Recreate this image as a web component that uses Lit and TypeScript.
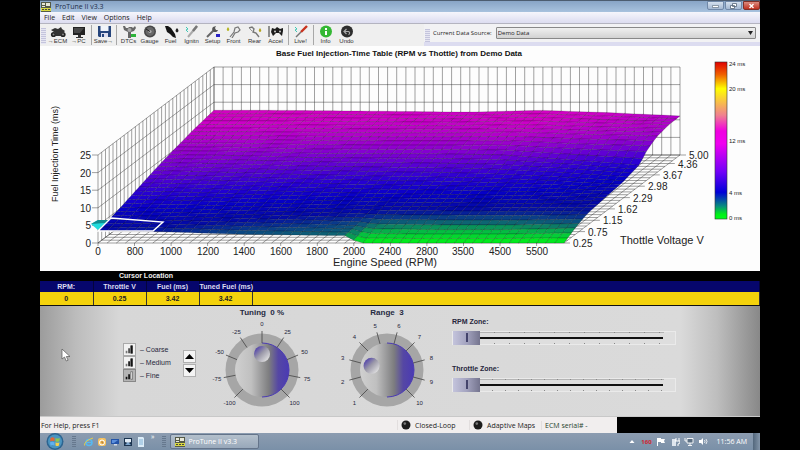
import { LitElement, html, svg, css, TemplateResult } from "lit";
import { customElement, property, state } from "lit/decorators.js";

/* ---------- Surface chart geometry ---------- */

const RPM_CELLS = 51;
const THROTTLE_CELLS = 31;
const ORIGIN = { x: 98, y: 243 };
const WIDTH = 466;
const DEPTH = { x: 116, y: 88 };
const MS = 3.52;

const RPM_LABELS = ["0", "800", "1000", "1200", "1400", "1600", "1800", "2000", "2400", "2800", "3500", "4500", "5500"];
const THROTTLE_LABELS = ["0.25", "0.75", "1.15", "1.62", "2.29", "2.98", "3.67", "4.36", "5.00"];

/* Injection time in ms, sampled at fractions of the two floor axes. */
const V_STOPS = [0, 0.1, 0.2, 0.35, 0.5, 0.65, 0.72, 0.8, 0.9, 1];
const SAMPLES: [number, number[]][] = [
  [0, [3.5, 4.3, 5.3, 7.0, 8.7, 10.1, 10.7, 11.4, 12.1, 12.7]],
  [0.12, [3.3, 4.1, 5.0, 6.6, 8.3, 10.0, 10.7, 11.4, 12.1, 12.7]],
  [0.3, [2.5, 3.4, 4.3, 5.8, 7.6, 9.4, 10.3, 11.2, 11.9, 12.5]],
  [0.45, [2.2, 2.9, 3.8, 5.3, 7.2, 9.3, 10.2, 11.1, 11.8, 12.3]],
  [0.53, [2.1, 2.5, 3.5, 5.1, 7.0, 9.3, 10.2, 11.1, 11.7, 12.2]],
  [0.56, [0, 1.7, 3.3, 5.0, 7.0, 9.3, 10.2, 11.1, 11.8, 12.2]],
  [0.7, [0, 1.4, 3.2, 4.8, 6.6, 9.0, 10.2, 11.3, 12.1, 12.7]],
  [0.85, [0, 1.4, 3.1, 4.5, 5.8, 7.6, 9.2, 10.6, 11.5, 12.0]],
  [1, [0, 1.9, 3.3, 4.0, 4.6, 6.0, 8.6, 10.2, 11.0, 11.1]],
];

const SCALE: [number, number[]][] = [
  [0, [0, 245, 20]],
  [1, [4, 200, 60]],
  [2.2, [14, 100, 115]],
  [3.6, [4, 10, 165]],
  [5, [6, 0, 200]],
  [6.5, [40, 0, 212]],
  [8.5, [105, 0, 212]],
  [12, [205, 0, 200]],
  [13, [215, 0, 190]],
];

function lerp(a: number, b: number, t: number) {
  return a + (b - a) * t;
}

function bracket(stops: number[], value: number): [number, number] {
  let i = 0;
  while (i < stops.length - 2 && value > stops[i + 1]) i++;
  return [i, Math.min(1, Math.max(0, (value - stops[i]) / (stops[i + 1] - stops[i])))];
}

function injection(u: number, v: number) {
  const [ui, ut] = bracket(SAMPLES.map((s) => s[0]), u);
  const [vi, vt] = bracket(V_STOPS, v);
  const near = lerp(SAMPLES[ui][1][vi], SAMPLES[ui][1][vi + 1], vt);
  const far = lerp(SAMPLES[ui + 1][1][vi], SAMPLES[ui + 1][1][vi + 1], vt);
  return lerp(near, far, ut);
}

function colour(ms: number) {
  const [i, t] = bracket(SCALE.map((s) => s[0]), ms);
  return `rgb(${[0, 1, 2].map((c) => Math.round(lerp(SCALE[i][1][c], SCALE[i + 1][1][c], t))).join(",")})`;
}

function point(u: number, v: number, ms: number): [number, number] {
  return [ORIGIN.x + WIDTH * u + DEPTH.x * v, ORIGIN.y - DEPTH.y * v - MS * ms];
}

function segment(a: [number, number], b: [number, number]) {
  return `M${a[0].toFixed(1)} ${a[1].toFixed(1)}L${b[0].toFixed(1)} ${b[1].toFixed(1)}`;
}

@customElement("fuel-chart")
export class FuelChart extends LitElement {
  static styles = css`
    :host { display: block; background: #fdfdfd; }
    svg { display: block; width: 100%; height: auto; font-family: "Liberation Sans", Arial, sans-serif; fill: #222; }
    .title { font-size: 8px; font-weight: bold; fill: #111; }
    .tick { font-size: 10px; }
    .axis { font-size: 11px; }
    .upright { font-size: 9px; }
    .legend { font-size: 6px; }
    .wall { fill: none; stroke: #333; stroke-width: 0.7; opacity: 0.65; }
    .cell { stroke: #000; stroke-opacity: 0.45; stroke-width: 0.4; }
    .mid { text-anchor: middle; }
    .end { text-anchor: end; }
    .cursor { fill: none; stroke: #fff; stroke-width: 1.4; }
  `;

  private walls() {
    let d = "";
    for (let i = 0; i <= RPM_CELLS; i++) {
      const u = i / RPM_CELLS;
      d += segment(point(u, 1, 0), point(u, 1, 25)) + segment(point(u, 0, 0), point(u, 1, 0));
    }
    for (let j = 0; j <= THROTTLE_CELLS; j++) {
      const v = j / THROTTLE_CELLS;
      d += segment(point(0, v, 0), point(0, v, 25)) + segment(point(0, v, 0), point(1, v, 0));
    }
    for (let ms = 0; ms <= 25; ms += 5) {
      const front = point(0, 0, ms);
      d += segment(point(0, 1, ms), point(1, 1, ms)) + segment(front, point(0, 1, ms));
      d += segment([front[0] - 6, front[1]], front);
    }
    RPM_LABELS.forEach((_, i) => {
      const p = point((i * 4) / RPM_CELLS, 0, 0);
      d += segment(p, [p[0], p[1] + 3]);
    });
    THROTTLE_LABELS.forEach((_, i) => {
      const p = point(1, Math.min(1, (i * 4) / THROTTLE_CELLS), 0);
      d += segment(p, [p[0] + 6, p[1]]);
    });
    return svg`<path class="wall" d=${d}></path>`;
  }

  private surface() {
    const cells: TemplateResult<2>[] = [];
    for (let j = THROTTLE_CELLS - 1; j >= 0; j--) {
      for (let i = 0; i < RPM_CELLS; i++) {
        const corners = [[i, j], [i + 1, j], [i + 1, j + 1], [i, j + 1]].map(([a, b]) => {
          const u = a / RPM_CELLS;
          const v = b / THROTTLE_CELLS;
          return { ms: injection(u, v), u, v };
        });
        const mean = corners.reduce((sum, c) => sum + c.ms, 0) / 4;
        const points = corners
          .map((c) => point(c.u, c.v, c.ms).map((n) => n.toFixed(1)).join(","))
          .join(" ");
        cells.push(svg`<polygon class="cell" points=${points} fill=${colour(mean)}></polygon>`);
      }
    }
    return cells;
  }

  render() {
    return html`
      <svg viewBox="40 46 720 225" role="img" aria-label="Base fuel injection-time surface">
        <defs>
          <linearGradient id="scale" x1="0" y1="0" x2="0" y2="1">
            <stop offset="0" stop-color="#e00000"></stop>
            <stop offset="0.08" stop-color="#f06000"></stop>
            <stop offset="0.17" stop-color="#ffff00"></stop>
            <stop offset="0.34" stop-color="#f08090"></stop>
            <stop offset="0.44" stop-color="#f000e0"></stop>
            <stop offset="0.52" stop-color="#f000f0"></stop>
            <stop offset="0.7" stop-color="#7000f8"></stop>
            <stop offset="0.83" stop-color="#0000d8"></stop>
            <stop offset="0.92" stop-color="#08907c"></stop>
            <stop offset="0.97" stop-color="#00f018"></stop>
            <stop offset="1" stop-color="#00ff18"></stop>
          </linearGradient>
        </defs>
        <text class="title mid" x="399" y="56">Base Fuel Injection-Time Table (RPM vs Thottle) from Demo Data</text>
        ${this.walls()}
        <polygon points="91,224 98,220 109,220 98,230" fill="#20dcdc"></polygon>
        <polygon points="91,224 98,220 109,220 105,223" fill="#108c90"></polygon>
        ${this.surface()}
        <polygon class="cursor" points="98,231 153,231 163,222 111,218"></polygon>
        ${[0, 5, 10, 15, 20, 25].map(
          (ms) => svg`<text class="tick end" x="91" y=${Math.round(ORIGIN.y - MS * ms + 4)}>${ms}</text>`
        )}
        ${RPM_LABELS.map(
          (label, i) => svg`<text class="tick mid" x=${Math.round(point((i * 4) / RPM_CELLS, 0, 0)[0])} y="255">${label}</text>`
        )}
        ${THROTTLE_LABELS.map((label, i) => {
          const p = point(1, Math.min(1, (i * 4) / THROTTLE_CELLS), 0);
          return svg`<text class="tick" x=${Math.round(p[0] + 9)} y=${Math.round(p[1] + 4)}>${label}</text>`;
        })}
        <text class="axis mid" x="385" y="266">Engine Speed (RPM)</text>
        <text class="axis" x="620" y="244">Thottle Voltage V</text>
        <text class="upright mid" transform="translate(58 154) rotate(-90)">Fuel Injection Time (ms)</text>
        <rect x="715" y="62" width="12" height="157" fill="url(#scale)" stroke="#333" stroke-width="0.6"></rect>
        ${[["24 ms", 66], ["20 ms", 91], ["12 ms", 143], ["4 ms", 195], ["0 ms", 220]].map(
          ([label, y]) => svg`<text class="legend" x="729" y=${y}>${label}</text>`
        )}
      </svg>
    `;
  }
}

/* ---------- Rotary knob ---------- */

@customElement("rotary-knob")
export class RotaryKnob extends LitElement {
  @property() label = "";
  @property() unit = "";
  @property({ type: Number }) value = 0;
  @property({ attribute: false }) marks: number[] = [];

  static styles = css`
    :host { display: block; }
    .knob { display: grid; grid-template-rows: 11px auto; justify-items: center; }
    .name { font-size: 8px; line-height: 11px; font-weight: bold; color: #262a42; white-space: pre; }
    .face { position: relative; width: 110px; }
    svg { display: block; width: 100%; }
    text { font-size: 6px; text-anchor: middle; fill: #26263c; font-family: "Liberation Sans", Arial, sans-serif; }
    .mark { stroke: #444; stroke-width: 0.8; }
    input { position: absolute; inset: 0; width: 100%; height: 100%; margin: 0; opacity: 0; cursor: pointer; }
  `;

  private angle(value: number) {
    const low = this.marks[0];
    const high = this.marks[this.marks.length - 1];
    return ((-135 + (270 * (value - low)) / (high - low)) * Math.PI) / 180;
  }

  render() {
    const at = (r: number, a: number) => [Math.sin(a) * r, -Math.cos(a) * r];
    const dot = at(16, this.angle(this.value));
    return html`
      <div class="knob">
        <label class="name" for="dial">${this.label}  ${this.value}${this.unit}</label>
        <div class="face">
          <svg viewBox="-55 -52 110 98" aria-hidden="true">
            <defs>
              <linearGradient id="cap">
                <stop offset="0" stop-color="#d0d0d0"></stop>
                <stop offset="0.3" stop-color="#c0c0c0"></stop>
                <stop offset="0.63" stop-color="#7d7d7f"></stop>
                <stop offset="0.8" stop-color="#5547a4"></stop>
                <stop offset="1" stop-color="#4a3ab4"></stop>
              </linearGradient>
              <linearGradient id="dimple" x1="0.1" y1="0.1" x2="0.9" y2="0.9">
                <stop offset="0" stop-color="#4c3cac"></stop>
                <stop offset="0.45" stop-color="#9a98a8"></stop>
                <stop offset="1" stop-color="#e4e4e4"></stop>
              </linearGradient>
            </defs>
            <circle r="36.5" fill="#a6a6a6"></circle>
            <circle r="27" fill="url(#cap)"></circle>
            <path d="M0 -27A27 27 0 0 1 0 27" fill="none" stroke="#4a3ab4"></path>
            ${this.marks.map((m) => {
              const a = this.angle(m);
              const [x1, y1] = at(27, a);
              const [x2, y2] = at(39, a);
              const [tx, ty] = at(46, a);
              return svg`
                <line class="mark" x1=${x1} y1=${y1} x2=${x2} y2=${y2}></line>
                <text x=${tx} y=${ty + 2}>${m}</text>`;
            })}
            <circle cx=${dot[0]} cy=${dot[1]} r="8" fill="url(#dimple)"></circle>
          </svg>
          <input id="dial" type="range" min=${this.marks[0]} max=${this.marks[this.marks.length - 1]} .value=${String(this.value)}
            @input=${(e: Event) => (this.value = Number((e.target as HTMLInputElement).value))} />
        </div>
      </div>
    `;
  }
}

/* ---------- Toolbar icons, 18 by 13 ---------- */

const ICONS: Record<string, TemplateResult<2>> = {
  ecm: svg`<circle cx="4.500" cy="9.500" r="2.600" fill="#222"></circle><circle cx="14" cy="9.500" r="2.600" fill="#222"></circle><path d="M2 5l4-2 3 1 3-2 1 2 3 2-2 2-2 3H7L5 7z" fill="#333"></path><circle cx="4.500" cy="9.500" r="1" fill="#888"></circle><circle cx="14" cy="9.500" r="1" fill="#888"></circle>`,
  pc: svg`<path d="M3 2l12 0v8H3z" fill="#222"></path><path d="M4 3l10 0-4 5H4z" fill="#484848"></path><path d="M8 10h3v2h2v1H6v-1h2z" fill="#333"></path>`,
  save: svg`<path d="M3 1h13v11H4l-1-1z" fill="#26457c"></path><path d="M5.500 1h8v5h-8z" fill="#f0f4fa"></path><path d="M6 8h7v4H6z" fill="#dde"></path><path d="M7 9h2v3H7z" fill="#26457c"></path>`,
  dtcs: svg`<path d="M3 1l2 0 1 2 2 0 1-1 3 0 1 1 2-2 1 2-2 3-3 1v6H8V7L4 5z" fill="#666"></path><circle cx="9.500" cy="5" r="2" fill="#aaa"></circle><path d="M11 9h5v3h-5z" fill="#2db43a"></path>`,
  gauge: svg`<circle cx="9" cy="6.500" r="6" fill="#484848"></circle><circle cx="9" cy="6.500" r="4.400" fill="#686868"></circle><circle cx="9" cy="6.500" r="1.600" fill="#aaa"></circle><path d="M9 6.500L5 4" stroke="#222" stroke-width="1"></path>`,
  fuel: svg`<path d="M3 1l3 0 3 2 2 3 2 3 1 4-3-1-3-3-3-2-1-3z" fill="#151515"></path><path d="M15 3q3 3 0 4.500q-3-1.500 0-4.500" fill="#222"></path>`,
  ignitn: svg`<path d="M14 1L5 12" stroke="#aaa" stroke-width="2"></path><path d="M14 1L10 6" stroke="#777" stroke-width="2.500"></path><path d="M3 2l2 2-2 1 2 2" stroke="#3cc8b4" fill="none"></path>`,
  setup: svg`<path d="M10 5L3 12" stroke="#666" stroke-width="2"></path><path d="M9 2a3 3 0 1 0 5 3l-2 0-1-2 1-2z" fill="#555"></path><path d="M12 9h4v3h-4z" fill="#2a22c4"></path>`,
  front: svg`<path d="M5 12l4-5 1-4 3-1 2 3-2 2-3 1-3 5" stroke="#777" stroke-width="1.200" fill="none"></path><path d="M3 2q2.500 3 0 4q-2.500-1 0-4" fill="#b4b420"></path>`,
  rear: svg`<path d="M3 3l3-1 2 2-1 3 3 1 3 4" stroke="#777" stroke-width="1.400" fill="none"></path><path d="M3 3l3 3" stroke="#999"></path><path d="M14 3q2.500 3 0 4q-2.500-1 0-4" fill="#b4a420"></path>`,
  accel: svg`<path d="M2 1v11" stroke="#333"></path><path d="M5 3l3 1 2-2 3 2 3-1 0 3-1 5-3-3-3 0-3 3-2-4z" fill="#1c1c1c"></path><circle cx="8" cy="6.500" r="1" fill="#ccc"></circle><circle cx="13" cy="6.500" r="1" fill="#ccc"></circle>`,
  live: svg`<path d="M15 1L9 7" stroke="#c8321e" stroke-width="2.400"></path><path d="M9 7L4 12" stroke="#777" stroke-width="1.400"></path><path d="M3 2l2 2-2 1 2 2" stroke="#3cc8b4" fill="none"></path>`,
  info: svg`<circle cx="9" cy="6.500" r="6" fill="#34b834"></circle><path d="M8 6h2v4H8zM8 3h2v2H8z" fill="#fff"></path>`,
  undo: svg`<circle cx="9" cy="6.500" r="6" fill="#2e2e2e"></circle><path d="M6 6.500h4.500a1.700 1.700 0 0 1 0 3.200M8.500 4L6 6.500 8.500 9" stroke="#aaa" stroke-width="1.200" fill="none"></path>`,
};

const TOOLS: [string, string][][] = [
  [["ecm", "→ECM"], ["pc", "→PC"]],
  [["save", "Save→"]],
  [["dtcs", "DTCs"], ["gauge", "Gauge"], ["fuel", "Fuel"], ["ignitn", "Ignitn"], ["setup", "Setup"], ["front", "Front"], ["rear", "Rear"], ["accel", "Accel"]],
  [["live", "Live!"]],
  [["info", "Info"], ["undo", "Undo"]],
];

const READOUT: [string, string][] = [
  ["RPM:", "0"],
  ["Throttle V", "0.25"],
  ["Fuel (ms)", "3.42"],
  ["Tuned Fuel (ms)", "3.42"],
];

@customElement("app-root")
export class AppRoot extends LitElement {
  @state() private step = "Fine";

  static styles = css`
    :host { display: block; min-height: 100vh; padding: 0 5%; background: #000; box-sizing: border-box;
      font-family: "Liberation Sans", Arial, sans-serif; font-size: 7px; color: #222; }
    button { font: inherit; color: inherit; padding: 0; margin: 0; border: 0; background: none; }
    .ui { font-family: "Open Sans", "Noto Sans", sans-serif; }

    .titlebar { display: flex; align-items: center; gap: 4px; height: 12px; padding-left: 1px; color: #1c2c48;
      border-top: 1px solid #4c5c70; box-sizing: border-box; background: linear-gradient(#88a4c6, #a8c2de); }
    .titlebar svg { width: 10px; height: 10px; }
    .caption { flex: 1; font-size: 7px; line-height: 10px; font-weight: normal; margin: 0; }
    .controls { display: flex; gap: 1px; align-self: flex-start; }
    .control { width: 17px; height: 9px; border: 1px solid #7088a8; border-radius: 0 0 2px 2px; box-sizing: border-box;
      background: linear-gradient(#d4e0ee, #a4b8d2); display: grid; place-items: center; }
    .control svg { width: 7px; height: 6px; }
    .close { background: linear-gradient(#dc8c80, #c03020); border-color: #803028; }

    .menu { display: flex; align-items: center; gap: 7px; height: 12px; padding: 0 4px; box-sizing: border-box;
      background: linear-gradient(#f6f6fc, #dcdcf0); border-bottom: 1px solid #b4b4c0; }
    .menu button { font-size: 7px; line-height: 10px; }

    .bars { display: flex; height: 22px; background: #efefef; }
    .grip { width: 5px; margin: 4px 2px 2px 1px; background: repeating-linear-gradient(#c4c4dc 0 1px, #e6e6f2 1px 2px); }
    .tools { display: flex; align-items: center; flex: 0 0 384px; }
    .tools .grip { align-self: stretch; margin-right: 1px; }
    .group { display: flex; }
    .group + .group { border-left: 1px solid #a8a8a8; margin-left: 2px; padding-left: 1px; }
    .tool { width: 21px; height: 20px; display: flex; flex-direction: column; align-items: center; }
    .tool svg { width: 18px; height: 13px; flex: none; }
    .tool span { font-size: 6px; line-height: 6px; white-space: nowrap; color: #333; }
    .source { display: flex; align-items: center; flex: 1; border-bottom: 4px solid #dcdcf0; padding-right: 4px; background: #f2f2f4; min-width: 0; }
    .source label { font-size: 6px; white-space: nowrap; margin-right: 4px; }
    .source .grip { align-self: stretch; margin: 5px 3px 0 1px; }
    .pick { flex: 1; position: relative; display: flex; min-width: 0; }
    select { appearance: none; width: 100%; height: 12px; font: inherit; font-size: 6px; color: #222; padding: 0 12px 0 1px;
      border: 1px solid #888; border-radius: 1px; background: linear-gradient(#f0f0f0, #d2d2d2); }
    .pick svg { position: absolute; right: 3px; top: 4px; width: 5px; height: 4px; pointer-events: none; }

    .readout { width: 100%; border-collapse: collapse; table-layout: fixed; background: #f4d20c; font-weight: bold; text-align: center; }
    .readout th, .readout td { padding: 0; white-space: nowrap; }
    .value-col { width: 53px; }
    .banner th { height: 10px; line-height: 10px; background: #000; color: #eee; font-size: 7px; }
    .heads th { height: 11px; line-height: 11px; background: #06066c; color: #dcdcf0; font-size: 7px; border-right: 1px solid #04043c; }
    .values td { height: 13px; line-height: 13px; font-size: 7px; color: #222; border-bottom: 1px solid #111; border-right: 1px solid #333; }

    .panel { position: relative; display: flex; height: 110px; padding: 1px 16px 0 83px; box-sizing: border-box; color: #26263c;
      background: linear-gradient(90deg, #9c9c9c 0, #bcbcbc 5%, #d7d7d7 11%, #dadada 89%, #bebebe 94%, #888 100%); }
    .pointer { position: absolute; left: 21px; top: 42px; width: 10px; height: 14px; }
    .steps { width: 60px; border: 0; padding: 0; margin: 36px 0 0; }
    .step { display: flex; align-items: center; gap: 4px; height: 13px; font-size: 7px; white-space: nowrap; }
    .step input { position: absolute; opacity: 0; margin: 0; }
    .step svg { width: 13px; height: 13px; border: 1px solid #aaa; box-sizing: border-box; background: #f2f2f2; }
    .step input:checked + svg { background: #b4b4b4; border-color: #888; }
    .spin { display: flex; flex-direction: column; gap: 1px; margin: 43px 11px 0 0; }
    .spin button { width: 13px; height: 13px; border: 1px solid #b0b0b0; background: #f4f4f4; display: grid; place-items: center; }
    .spin svg { width: 9px; height: 5px; }
    rotary-knob + rotary-knob { margin-left: 15px; }
    .zones { flex: 0 1 224px; min-width: 0; margin: 10px 0 0 10px; display: flex; flex-direction: column; gap: 20px; }
    .zone { display: grid; gap: 4px; font-size: 7px; line-height: 10px; font-weight: bold; }
    .zone input { appearance: none; width: 100%; height: 14px; margin: 0; box-sizing: border-box; border: 1px solid #eaeaea;
      background:
        linear-gradient(#111, #111) 26px 5px / 184px 2px no-repeat,
        repeating-linear-gradient(90deg, #888 0 1px, transparent 1px var(--pitch)) 26px 0 / 185px 1px no-repeat,
        repeating-linear-gradient(90deg, #888 0 1px, transparent 1px var(--pitch)) 26px 11px / 185px 1px no-repeat,
        linear-gradient(#b4b4b4, #b4b4b4) 26px 0 / 185px 1px no-repeat,
        #dedede; }
    .zone + .zone { margin-top: -1px; }
    .wide { --pitch: 15px; }
    .close-set { --pitch: 13px; }
    .zone input::-webkit-slider-thumb { appearance: none; width: 27px; height: 14px; border: 0;
      background: linear-gradient(90deg, transparent 13px, #44446c 13px 15px, transparent 15px) 0 2px / 27px 9px no-repeat,
        linear-gradient(90deg, #c4c4dc, #a4a4c0 50%, #74748e); }

    .status { display: flex; align-items: center; height: 17px; font-size: 7px; background: #f1eeee; border-top: 1px solid #c8c8c8; box-sizing: border-box; }
    .help { flex: 1; padding-left: 1px; }
    .lamp { display: flex; align-items: center; gap: 4px; width: 72px; padding-left: 3px; box-sizing: border-box; white-space: nowrap; border-left: 1px solid #e2dede; }
    .lamp svg { width: 10px; height: 10px; }
    .serial { width: 76px; padding-left: 3px; box-sizing: border-box; border-left: 1px solid #e2dede; color: #26442c; }
    .blank { width: 143px; align-self: stretch; background: #000; }

    .taskbar { display: flex; align-items: center; height: 17px; background: linear-gradient(#8c9cb0, #7a90a8); color: #fff; }
    .orb { width: 20px; height: 17px; margin-left: 5px; }
    .orb svg { display: block; width: 20px; height: 17px; }
    .dots { width: 4px; height: 11px; margin: 0 8px 0 7px; background: repeating-linear-gradient(#66788e 0 1px, transparent 1px 2px); }
    .quick { display: flex; gap: 3px; align-items: center; }
    .quick svg { display: block; width: 10px; height: 10px; }
    .more { margin: 0 8px 0 5px; font-size: 7px; line-height: 7px; align-self: flex-start; }
    .more + .dots { margin: 0 4px 0 0; }
    .task { width: 89px; height: 15px; display: flex; align-items: center; gap: 3px; padding-left: 4px; font-size: 7px; color: #fff;
      border: 1px solid #64748a; border-radius: 2px; box-sizing: border-box; background: linear-gradient(#b4c0cc, #98a8ba); }
    .task svg { width: 10px; height: 10px; }
    .tray { margin-left: auto; display: flex; align-items: center; gap: 4px; }
    .tray svg { width: 10px; height: 9px; display: block; }
    .temp { color: #d02430; font-size: 6px; font-weight: bold; }
    .clock { font-size: 7px; margin: 0 2px 0 5px; white-space: nowrap; }
    .desk { width: 7px; height: 17px; background: linear-gradient(90deg, #53677c, #8496aa); }
  `;

  private appIcon() {
    return html`<svg viewBox="0 0 10 10" aria-hidden="true"><path d="M0 0h10v10H0z" fill="#555a48"></path><path d="M1 1h3v2H1zM5 1h4v3H5zM1 4h3v1H1z" fill="#e8e8d8"></path><path d="M0 6h10v3H0z" fill="#d8d840"></path><path d="M1 7h2v1H1zM4 7h2v1H4zM7 7h2v1H7z" fill="#444"></path></svg>`;
  }

  private lamp(label: string) {
    return html`<div class="lamp">
      <svg viewBox="0 0 10 10" aria-hidden="true"><circle cx="5" cy="5" r="4.500" fill="#1c1c1c"></circle><circle cx="3.800" cy="3.600" r="1.300" fill="#777"></circle></svg>${label}
    </div>`;
  }

  render() {
    return html`
      <header>
        <div class="titlebar ui">
          ${this.appIcon()}
          <h1 class="caption">ProTune II v3.3</h1>
          <div class="controls">
            <button class="control" aria-label="Minimize"><svg viewBox="0 0 7 6"><path d="M.5 2.500h6v2h-6z" fill="#fff" stroke="#567" stroke-width=".6"></path></svg></button>
            <button class="control" aria-label="Restore"><svg viewBox="0 0 7 6"><path d="M2.500.5h4v3h-4zM.5 2.500h4v3h-4z" fill="#fff" stroke="#567" stroke-width=".8"></path></svg></button>
            <button class="control close" aria-label="Close"><svg viewBox="0 0 7 6"><path d="M1.500 1l4 4M5.500 1l-4 4" stroke="#fff" stroke-width="1.400"></path></svg></button>
          </div>
        </div>
        <nav class="menu ui">
          ${["File", "Edit", "View", "Options", "Help"].map((m) => html`<button>${m}</button>`)}
        </nav>
        <div class="bars">
          <div class="tools">
            <div class="grip"></div>
            ${TOOLS.map(
              (group) => html`<div class="group">
                ${group.map(([icon, label]) => html`<button class="tool"><svg viewBox="0 0 18 13" aria-hidden="true">${ICONS[icon]}</svg><span>${label}</span></button>`)}
              </div>`
            )}
          </div>
          <div class="source ui">
            <div class="grip"></div>
            <label for="source">Current Data Source:</label>
            <div class="pick">
              <select id="source"><option>Demo Data</option></select>
              <svg viewBox="0 0 5 4" aria-hidden="true"><path d="M0 0h5L2.500 4z" fill="#222"></path></svg>
            </div>
          </div>
        </div>
      </header>

      <fuel-chart></fuel-chart>

      <table class="readout">
        <colgroup>${READOUT.map(() => html`<col class="value-col" />`)}<col /></colgroup>
        <thead>
          <tr class="banner"><th colspan="4">Cursor Location</th><th></th></tr>
          <tr class="heads">${READOUT.map(([h]) => html`<th scope="col">${h}</th>`)}<th></th></tr>
        </thead>
        <tbody>
          <tr class="values">${READOUT.map(([, v]) => html`<td>${v}</td>`)}<td></td></tr>
        </tbody>
      </table>

      <section class="panel">
        <fieldset class="steps" aria-label="Tuning step">
          ${["Coarse", "Medium", "Fine"].map(
            (name, i) => html`<label class="step">
              <input type="radio" name="step" .checked=${this.step === name} @change=${() => (this.step = name)} />
              <svg viewBox="0 0 13 13" aria-hidden="true">
                <path d="M2 8h2v3H2z" fill=${i === 2 ? "#111" : "#777"}></path>
                <path d="M5 5h2v6H5z" fill=${i === 0 ? "#444" : "#111"}></path>
                <path d="M8 2h2v9H8z" fill=${i === 2 ? "#eee" : "#111"} stroke="#222" stroke-width=${i === 2 ? 0.5 : 0.8}></path>
              </svg>
              – ${name}
            </label>`
          )}
        </fieldset>
        <div class="spin">
          <button aria-label="Increase"><svg viewBox="0 0 9 5"><path d="M4.500 0L9 5H0z" fill="#000"></path></svg></button>
          <button aria-label="Decrease"><svg viewBox="0 0 9 5"><path d="M0 0h9L4.500 5z" fill="#000"></path></svg></button>
        </div>
        <rotary-knob label="Tuning" unit=" %" .value=${0} .marks=${[-100, -75, -50, -25, 0, 25, 50, 75, 100]}></rotary-knob>
        <rotary-knob label="Range" .value=${3} .marks=${[1, 2, 3, 4, 5, 6, 7, 8, 9, 10]}></rotary-knob>
        <div class="zones">
          <div class="zone"><label for="rpm">RPM Zone:</label><input class="wide" id="rpm" type="range" min="0" max="12" value="0" /></div>
          <div class="zone"><label for="throttle">Throttle Zone:</label><input class="close-set" id="throttle" type="range" min="0" max="14" value="0" /></div>
        </div>
        <svg class="pointer" viewBox="0 0 10 14" aria-hidden="true"><path d="M1 1v10l2.500-2 1.800 4 1.800-.8-1.800-3.700H9z" fill="#fff" stroke="#555" stroke-width=".7"></path></svg>
      </section>

      <footer>
        <div class="status ui">
          <span class="help">For Help, press F1</span>
          ${this.lamp("Closed-Loop")}${this.lamp("Adaptive Maps")}
          <span class="serial">ECM serial# -</span>
          <span class="blank"></span>
        </div>
        <div class="taskbar ui">
          <button class="orb" aria-label="Start">
            <svg viewBox="0 0 20 17"><circle cx="10" cy="8.500" r="8.500" fill="#2c6490"></circle><circle cx="10" cy="8.500" r="7" fill="#4a94c0"></circle><path d="M5.500 5q2-1.500 4 0v3.200q-2-1-4.300 0z" fill="#e06838"></path><path d="M10.500 5q2 1.200 4.300 0l-.5 3.200q-2 1-3.800 0z" fill="#8cc850"></path><path d="M5 9.200q2.300-1 4.500 0v3.300q-2-1-4 0z" fill="#60b0f0"></path><path d="M10.500 9.200q2 1 4 0l-.6 3.300q-1.700 1-3.400 0z" fill="#f4d04c"></path></svg>
          </button>
          <span class="dots"></span>
          <div class="quick">
            <svg viewBox="0 0 10 10"><circle cx="5" cy="5.500" r="3" fill="none" stroke="#58b8f0" stroke-width="1.600"></circle><path d="M2.500 5.500h5.500" stroke="#58b8f0" stroke-width="1.200"></path><path d="M.5 8.500Q0 4 9 1" fill="none" stroke="#e8cc48"></path></svg>
            <svg viewBox="0 0 10 10"><rect x="1" y="1" width="8" height="8" rx="2" fill="#f4c060"></rect><circle cx="5" cy="5.500" r="2.500" fill="none" stroke="#fff"></circle><path d="M5 4v2h1.500" stroke="#a86820" fill="none" stroke-width=".8"></path></svg>
            <svg viewBox="0 0 10 10"><path d="M1 2h8v5H1z" fill="#2454a8"></path><path d="M2 3h6L4 6H2z" fill="#5c90dc"></path><path d="M4 7h3v1.500H4z" fill="#d4dce8"></path></svg>
            <svg viewBox="0 0 10 10"><path d="M1 1h8v8H1z" fill="#1c3450"></path><path d="M2 2h6v3L5 6 2 5z" fill="#e0eaf4"></path><path d="M2 8l3-3 3 3z" fill="#7ca4cc"></path></svg>
            <svg viewBox="0 0 10 10"><path d="M2 0h5l1 1v9H2z" fill="#dcecf8"></path><path d="M3 3h4M3 5h4M3 7h4" stroke="#6ca4cc" stroke-width=".8"></path></svg>
          </div>
          <span class="more">»</span>
          <span class="dots"></span>
          <button class="task">${this.appIcon()}ProTune II v3.3</button>
          <div class="tray">
            <svg viewBox="0 0 10 9"><path d="M5 3l2.500 3h-5z" fill="#fff"></path></svg>
            <span class="temp">160</span>
            <svg viewBox="0 0 10 9"><path d="M1.500 1v8" stroke="#fff"></path><path d="M2 1h3v1h4L8 4l1 2H5V5H2z" fill="#fff"></path></svg>
            <svg viewBox="0 0 10 9"><path d="M2 2h4v7H2z" fill="#dfe6ee"></path><path d="M6 1v3M9 1v3M5 4h5v2L8 7v2" stroke="#fff" fill="none"></path></svg>
            <svg viewBox="0 0 10 9"><path d="M3 1.500h6v4.500H3z" fill="#5c7084" stroke="#fff" stroke-width=".9"></path><path d="M1 1v3h2M4 8.500h4M6 6v2" stroke="#fff" stroke-width=".9" fill="none"></path></svg>
            <svg viewBox="0 0 10 9"><path d="M1 3h2l2-2v7L3 6H1z" fill="#fff"></path><path d="M6.500 3q1 1.500 0 3M8 2q2 2.500 0 5" stroke="#fff" fill="none" stroke-width=".8"></path></svg>
            <span class="clock">11:56 AM</span>
            <span class="desk"></span>
          </div>
        </div>
      </footer>
    `;
  }
}
